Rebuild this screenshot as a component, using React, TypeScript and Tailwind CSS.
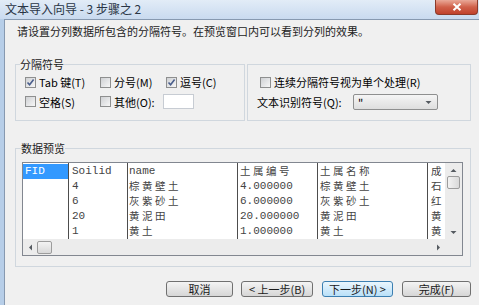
import React from 'react';

const Check = ({ checked = false }: { checked?: boolean }) => (
    <span className="flex h-[11px] w-[11px] shrink-0 items-center justify-center border border-[#8e8f8f] bg-linear-to-br from-[#cfd1d4] to-[#f7f7f7]">
        {checked && (
            <svg width="9" height="9" viewBox="0 0 9 9">
                <path d="M1.5 4.5 L3.6 6.8 L7.6 1.6" fill="none" stroke="#4a5e8c" strokeWidth="1.6" />
            </svg>
        )}
    </span>
);

const Tri = ({ dir }: { dir: 'up' | 'down' | 'left' | 'right' }) => {
    const pts = {
        up: '0.5,4 3.5,1 6.5,4',
        down: '0.5,1 3.5,4 6.5,1',
        left: '4,0.5 1,3.5 4,6.5',
        right: '1,0.5 4,3.5 1,6.5',
    }[dir];
    const size = dir === 'up' || dir === 'down' ? { w: 7, h: 5 } : { w: 5, h: 7 };
    return (
        <svg width={size.w} height={size.h} viewBox={`0 0 ${size.w} ${size.h}`}>
            <polygon points={pts} fill="#555a60" />
        </svg>
    );
};

const Btn = ({ label, w, focused = false }: { label: string; w: string; focused?: boolean }) => (
    <div
        className={
            focused
                ? `${w} flex h-[16px] items-center justify-center rounded-[3px] border border-[#3c7fb1] bg-linear-to-b from-[#eaf6fd] to-[#b9e0f8] text-[11px] leading-none text-[#1a1a1a]`
                : `${w} flex h-[16px] items-center justify-center rounded-[3px] border border-[#707070] bg-linear-to-b from-[#f4f4f4] to-[#d6d6d6] text-[11px] leading-none text-[#1a1a1a]`
        }
    >
        {label}
    </div>
);

const columns = [
    { w: 'w-[46px]', pl: 'pl-[2px]', cells: ['FID', '', '', '', ''] },
    { w: 'w-[59px]', pl: 'pl-[3px]', cells: ['Soilid', '4', '6', '20', '1'] },
    { w: 'w-[110px]', pl: 'pl-[1px]', cells: ['name', '棕黄壁土', '灰紫砂土', '黄泥田', '黄土'] },
    { w: 'w-[80px]', pl: 'pl-[2px]', cells: ['土属编号', '4.000000', '6.000000', '20.000000', '1.000000'] },
    { w: 'w-[110px]', pl: 'pl-[2px]', cells: ['土属名称', '棕黄壁土', '灰紫砂土', '黄泥田', '黄土'] },
    { w: 'w-[17px]', pl: 'pl-[3px]', cells: ['成', '石', '红', '黄', '黄'] },
];

const isCjk = (s: string) => /[\u4e00-\u9fff]/.test(s);

const App = () => {
    return (
        <div className="flex h-[305px] w-[479px] flex-col overflow-hidden bg-[#bcd1ea] text-[11px] text-black [font-family:'Noto_Sans_CJK_SC','Noto_Sans',sans-serif]">
            <div className="flex h-[19px] shrink-0 items-start bg-linear-to-b from-[#e2ecf7] to-[#c9daef]">
                <span className="ml-[5px] mt-[2px] text-[12px] leading-[14px] text-[#2a3545]">文本导入向导 - 3 步骤之 2</span>
                <div className="ml-auto mr-[1px] flex h-[15px] w-[43px] items-center justify-center rounded-b-[4px] border border-t-0 border-[#8b3a2a] bg-linear-to-b from-[#e9a898] via-[#d0604a] to-[#c0412c]">
                    <svg width="10" height="8" viewBox="0 0 10 8">
                        <path d="M1.5 0.8 L8.5 7.2 M8.5 0.8 L1.5 7.2" stroke="#ffffff" strokeWidth="2" />
                    </svg>
                </div>
            </div>

            <div className="flex min-h-0 flex-1">
                <div className="w-[4px] shrink-0 bg-[#b7cee8]" />
                <div className="flex flex-1 flex-col border-l border-t border-[#8799b0] bg-[#f0f0f0]">
                    <p className="ml-[12px] mt-[4px] leading-[14px] text-[#222]">
                        请设置分列数据所包含的分隔符号。在预览窗口内可以看到分列的效果。
                    </p>

                    <div className="ml-[10px] mt-[19px] flex items-start gap-[2px]">
                        <fieldset className="h-[64px] w-[230px] border border-[#d0d7de] px-[4px]">
                            <legend className="leading-[14px] text-[#222]">分隔符号</legend>
                            <div className="ml-[5px] mt-[4px] flex h-[14px] items-center">
                                <label className="flex w-[75px] items-center gap-[3px]">
                                    <Check checked />
                                    <span className="leading-[14px]">Tab 键(T)</span>
                                </label>
                                <label className="flex w-[66px] items-center gap-[3px]">
                                    <Check />
                                    <span className="leading-[14px]">分号(M)</span>
                                </label>
                                <label className="flex items-center gap-[3px]">
                                    <Check checked />
                                    <span className="leading-[14px]">逗号(C)</span>
                                </label>
                            </div>
                            <div className="ml-[5px] mt-[5px] flex h-[15px] items-center">
                                <label className="flex w-[75px] items-center gap-[3px]">
                                    <Check />
                                    <span className="leading-[14px]">空格(S)</span>
                                </label>
                                <label className="flex w-[63px] items-center gap-[3px]">
                                    <Check />
                                    <span className="leading-[14px]">其他(O):</span>
                                </label>
                                <div className="h-[15px] w-[31px] border border-[#c7ccd3] bg-white" />
                            </div>
                        </fieldset>

                        <fieldset className="mt-[7px] h-[57px] w-[224px] border border-[#d0d7de] pl-[9px] pt-[10px]">
                            <label className="ml-[3px] flex h-[14px] items-center gap-[3px]">
                                <Check />
                                <span className="leading-[14px]">连续分隔符号视为单个处理(R)</span>
                            </label>
                            <div className="mt-[5px] flex h-[16px] items-center">
                                <span className="w-[96px] leading-[14px]">文本识别符号(Q):</span>
                                <div className="flex h-[16px] w-[85px] items-center justify-between rounded-[2px] border border-[#8e8f8f] bg-linear-to-b from-[#f5f5f5] to-[#dedede] pl-[4px] pr-[5px]">
                                    <span className="text-[11px] leading-none">"</span>
                                    <Tri dir="down" />
                                </div>
                            </div>
                        </fieldset>
                    </div>

                    <fieldset className="ml-[10px] mt-[20px] h-[126px] w-[456px] border border-[#d0d7de] px-[5px]">
                        <legend className="leading-[14px] text-[#222]">数据预览</legend>
                        <div className="ml-[1px] mt-[7px] flex h-[94px] w-[441px] flex-col border border-[#828790] bg-white">
                            <div className="flex h-[76px]">
                                <div className="flex w-[422px]">
                                    {columns.map((col, ci) => (
                                        <div
                                            key={ci}
                                            className={`${col.w} flex h-full shrink-0 flex-col pt-[1px] ${ci < columns.length - 1 ? 'border-r border-[#4d4d4d]' : ''}`}
                                        >
                                            {col.cells.map((cell, ri) => (
                                                <div
                                                    key={ri}
                                                    className={
                                                        ci === 0 && ri === 0
                                                            ? `flex h-[15px] items-center overflow-hidden bg-[#3399ff] ${col.pl} text-white`
                                                            : `flex h-[15px] items-center overflow-hidden ${col.pl} text-[#444]`
                                                    }
                                                >
                                                    {isCjk(cell) ? (
                                                        <span className="whitespace-nowrap text-[10.5px] leading-none tracking-[2.5px]">{cell}</span>
                                                    ) : (
                                                        <span className="whitespace-nowrap text-[11px] leading-none [font-family:'Liberation_Mono',monospace]">{cell}</span>
                                                    )}
                                                </div>
                                            ))}
                                        </div>
                                    ))}
                                </div>
                                <div className="flex w-[17px] flex-col items-center bg-[#ececec] pt-[5px]">
                                    <Tri dir="up" />
                                    <div className="mt-[3px] h-[13px] w-[13px] rounded-[2px] border border-[#9c9c9c] bg-linear-to-r from-[#f3f3f3] to-[#d9d9d9]" />
                                    <div className="flex-1" />
                                    <div className="mb-[4px]">
                                        <Tri dir="down" />
                                    </div>
                                </div>
                            </div>
                            <div className="flex h-[16px] items-center bg-[#ececec]">
                                <div className="flex w-[422px] items-center pl-[5px]">
                                    <Tri dir="left" />
                                    <div className="ml-[4px] h-[13px] w-[15px] rounded-[2px] border border-[#9c9c9c] bg-linear-to-b from-[#f3f3f3] to-[#d9d9d9]" />
                                    <div className="flex-1" />
                                    <div className="mr-[4px]">
                                        <Tri dir="right" />
                                    </div>
                                </div>
                                <div className="w-[17px]" />
                            </div>
                        </div>
                    </fieldset>

                    <div className="ml-[161px] mt-[14px] flex items-center">
                        <Btn label="取消" w="w-[67px]" />
                        <div className="ml-[8px]">
                            <Btn label="< 上一步(B)" w="w-[72px]" />
                        </div>
                        <div className="ml-[9px]">
                            <Btn label="下一步(N) >" w="w-[71px]" focused />
                        </div>
                        <div className="ml-[9px]">
                            <Btn label="完成(F)" w="w-[69px]" />
                        </div>
                    </div>
                </div>
            </div>
        </div>
    );
};

export default App;
